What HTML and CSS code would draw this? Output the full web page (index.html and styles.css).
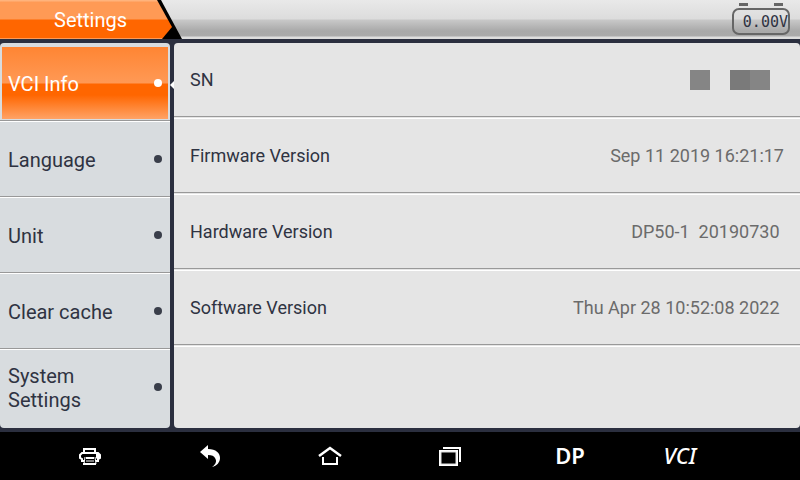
FILE: index.html
```html
<!DOCTYPE html>
<html lang="en">
<head>
    <meta charset="UTF-8">
    <meta name="viewport" content="width=device-width, initial-scale=1.0">
    <title>Settings</title>
    <link rel="stylesheet" href="styles.css">
</head>
<body>
    <header class="topbar">
        <div class="crumb">
            <h1 class="crumb-label">Settings</h1>
        </div>
        <div class="battery">
            <span class="battery-value">0.00V</span>
        </div>
    </header>

    <main class="content">
        <div class="menu">
            <button type="button" class="menu-item active">VCI Info</button>
            <button type="button" class="menu-item">Language</button>
            <button type="button" class="menu-item">Unit</button>
            <button type="button" class="menu-item">Clear cache</button>
            <button type="button" class="menu-item">System<br>Settings</button>
        </div>

        <dl class="info">
            <div class="info-row">
                <dt>SN</dt>
                <dd class="masked"><span class="block"></span><span class="block dark"></span><span class="block"></span></dd>
            </div>
            <div class="info-row">
                <dt>Firmware Version</dt>
                <dd>Sep 11 2019 16:21:17</dd>
            </div>
            <div class="info-row">
                <dt>Hardware Version</dt>
                <dd>DP50-1&nbsp; 20190730&nbsp;</dd>
            </div>
            <div class="info-row">
                <dt>Software Version</dt>
                <dd>Thu Apr 28 10:52:08 2022&nbsp;</dd>
            </div>
        </dl>
    </main>

    <nav class="navbar">
        <button type="button" class="nav-button" aria-label="Print">
            <svg width="24" height="24" viewBox="0 0 24 24" fill="none" stroke="#fff" stroke-width="2">
                <path d="M6 8V5h11v3"/>
                <path d="M6 17H4v-2l-2-1v-3l2-2h16l2 2v3l-2 1v2h-2"/>
                <path d="M7 13l-1 7h12l-1-7" stroke-width="1"/>
                <path d="M5 20h13M8 14h8" stroke-width="2"/>
                <path d="M8 17h8" stroke-width="1"/>
                <path d="M18 10h4v4l-2 2-2-2z" fill="#fff" stroke="none"/>
            </svg>
        </button>
        <button type="button" class="nav-button" aria-label="Back">
            <svg width="24" height="24" viewBox="0 0 24 24" fill="#fff">
                <path d="M2 8l8-7v4c8 0 12 4 12 9 0 4-3 8-8 9 4-3 5-6 3-9-1-2-3-3-7-3v4z"/>
            </svg>
        </button>
        <button type="button" class="nav-button" aria-label="Home">
            <svg width="24" height="24" viewBox="0 0 24 24" fill="none" stroke="#fff">
                <path d="M1 12l11-8 11 8" stroke-width="2.500"/>
                <path d="M5 13v7h14v-7" stroke-width="2"/>
            </svg>
        </button>
        <button type="button" class="nav-button" aria-label="Recent apps">
            <svg width="24" height="24" viewBox="0 0 24 24" fill="none" stroke="#fff" stroke-width="2">
                <path d="M5 4h17v14"/>
                <path d="M2 7h17v14H2z"/>
                <path d="M3 8h15v12H3z" stroke="#ddd" stroke-width="1"/>
            </svg>
        </button>
        <button type="button" class="nav-button dp">DP</button>
        <button type="button" class="nav-button vci">VCI</button>
    </nav>
</body>
</html>
```

FILE: styles.css
```css
* {
    box-sizing: border-box;
}
body {
    margin: 0;
    min-height: 100vh;
    display: flex;
    flex-direction: column;
    background-color: #2b2f3f;
    color: #2f3342;
    font-family: Roboto, "Noto Sans", sans-serif;
}
button {
    margin: 0;
    padding: 0;
    border: none;
    background: none;
    color: inherit;
    font-family: inherit;
    cursor: pointer;
}

/* top bar */
.topbar {
    display: flex;
    justify-content: space-between;
    height: 39px;
    padding-right: 10px;
    background: linear-gradient(#e9e9e9, #dcdcdc 19px, #c8c8c8 20px, #a9a9a9 31px, #aaaaaa 36px, #dddddd 37px, #dddddd 38px);
}
.crumb {
    width: 182px;
    background-color: #000;
    clip-path: polygon(0 0, 161px 0, 100% 100%, 0 100%);
}
.crumb-label {
    margin: 0;
    height: 39px;
    padding-left: 54px;
    background: linear-gradient(#ffb37c 1px, #ff9a55 2px, #ff9a55 19px, #ff6600 20px, #ff6600 38px, #ff9a55 38px);
    clip-path: polygon(0 0, 157px 0, 172px 27px, 162px 100%, 0 100%);
    color: #fff;
    font-size: 20px;
    font-weight: 400;
    line-height: 40px;
}
.battery {
    position: relative;
    width: 58px;
    height: 27px;
    margin-top: 8px;
    border: 2px solid #666;
    border-radius: 7px;
    text-align: right;
}
.battery::before,
.battery::after {
    content: "";
    position: absolute;
    top: -7px;
    width: 9px;
    height: 3px;
    background-color: #666;
}
.battery::before {
    left: 5px;
}
.battery::after {
    right: 5px;
}
.battery-value {
    font-family: "DejaVu Sans Mono", monospace;
    font-size: 15px;
    line-height: 24px;
}

/* main area */
.content {
    flex: 1;
    display: grid;
    grid-template-columns: 170px 1fr;
    gap: 4px;
    padding: 4px 0;
}
.menu {
    padding: 3px 0 2px;
    background-color: #d8dcdf;
    border-radius: 4px;
}
.menu-item {
    position: relative;
    display: flex;
    align-items: center;
    justify-content: space-between;
    width: 100%;
    height: 76px;
    padding: 0 8px;
    border-bottom: 1px solid #fff;
    box-shadow: inset 0 -1px #999;
    font-size: 20px;
    line-height: 24px;
    text-align: left;
}
.menu-item:last-child {
    border-bottom-color: transparent;
    box-shadow: none;
}
.menu-item::after {
    content: "";
    width: 8px;
    height: 8px;
    margin-bottom: 2px;
    border-radius: 50%;
    background-color: #393e4a;
}
.menu-item.active {
    background: linear-gradient(#ff8533, #ff9955 36px, #ff6600 37px, #ff6600 48px, #ffa366 72px) 2px 1px / 166px 72px no-repeat;
    color: #fff;
}
.menu-item.active::after {
    background-color: #fff;
}
.menu-item.active::before {
    content: "";
    position: absolute;
    top: 35px;
    right: -4px;
    width: 4px;
    height: 8px;
    background-color: #fff;
    clip-path: polygon(100% 0, 100% 100%, 0 50%);
}
.info {
    margin: 0;
    background-color: #e5e5e5;
    border-radius: 4px;
}
.info-row {
    display: flex;
    align-items: center;
    justify-content: space-between;
    height: 76px;
    padding: 0 16px 2px;
    border-bottom: 1px solid #fff;
    box-shadow: inset 0 -1px #e5e5e5, inset 0 -2px #999;
    font-size: 18px;
    line-height: 24px;
}
.info-row dd {
    margin: 0;
    color: #6b6b6b;
}
.info-row .masked {
    display: flex;
    padding-right: 14px;
}
.block {
    width: 20px;
    height: 20px;
    background-color: #858585;
}
.block.dark {
    margin-left: 20px;
    background-color: #7a7a7a;
}

/* bottom bar */
.navbar {
    display: grid;
    grid-template-columns: repeat(6, 1fr);
    height: 48px;
    padding: 0 50px 0 30px;
    background-color: #000;
    color: #fff;
}
.nav-button {
    display: flex;
    align-items: center;
    justify-content: center;
}
.nav-button.dp {
    padding-bottom: 2px;
    font-family: "Noto Sans", sans-serif;
    font-size: 22px;
    font-weight: 600;
}
.nav-button.vci {
    padding: 0 20px 2px 0;
    font-family: "Noto Sans", sans-serif;
    font-size: 22px;
    font-weight: 500;
    font-style: italic;
}
```
